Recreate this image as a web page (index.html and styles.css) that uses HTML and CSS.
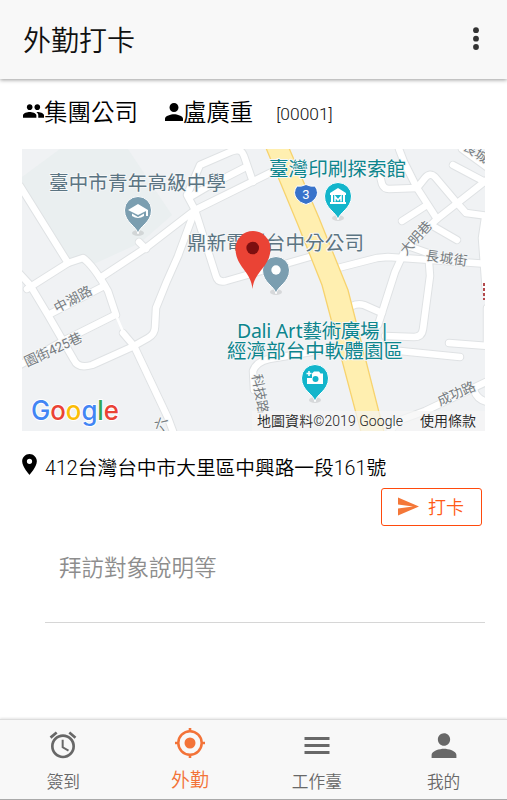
FILE: index.html
```html
<!DOCTYPE html>
<html lang="zh-Hant">
<head>
<meta charset="utf-8">
<title>外勤打卡</title>
<link rel="stylesheet" href="styles.css">
</head>
<body>
<header class="bar">
  <h1 class="title">外勤打卡</h1>
  <svg class="more" viewBox="0 0 8 24"><circle cx="4" cy="3.200" r="2.900"/><circle cx="4" cy="11.700" r="2.900"/><circle cx="4" cy="20" r="2.900"/></svg>
</header>
<main class="content">
  <div class="who">
    <svg class="group-icon" viewBox="1 5 22 14"><path d="M16 11c1.660 0 2.990-1.340 2.990-3S17.660 5 16 5s-3 1.340-3 3 1.340 3 3 3zm-8 0c1.660 0 2.990-1.340 2.990-3S9.660 5 8 5 5 6.340 5 8s1.340 3 3 3zm0 2c-2.330 0-7 1.170-7 3.500V19h14v-2.500c0-2.330-4.670-3.500-7-3.500zm8 0c-.29 0-.62.02-.97.05 1.160.84 1.970 1.970 1.970 3.450V19h6v-2.500c0-2.330-4.670-3.500-7-3.500z"/></svg>
    <span class="company">集團公司</span>
    <svg class="person-icon" viewBox="4 4 16 16"><path d="M12 12c2.210 0 4-1.790 4-4s-1.790-4-4-4-4 1.790-4 4 1.790 4 4 4zm0 2c-2.670 0-8 1.340-8 4v2h16v-2c0-2.660-5.330-4-8-4z"/></svg>
    <span class="name">盧廣重</span>
    <span class="code">[00001]</span>
  </div>
  <svg class="map" viewBox="22 149 463 282">
    <defs>
      <g id="roads">
        <path d="M20 186L68 263L83 258Q93 265 108 291L116 315"/>
        <path d="M123 333L134 346L168 418L174 434"/>
        <path d="M18 272L30 285L48 315L74 360Q78 369 92 365L132 347L148 338Q155 334 155 327L156 308Q166 282 178 256L195 210"/>
        <path d="M27 289L68 263"/>
        <path d="M100 278L147 247L195 210L280 168"/>
        <path d="M139 242L146 249"/>
        <path d="M195 210L187 195L200 165L230 152Q241 147 244 156L253 182"/>
        <path d="M190 197L207 187L246 167"/>
        <path d="M195 210L216 276Q218 283 226 281L313 256"/>
        <path d="M50 314L104 286"/><path d="M18 366L63 341L115 315"/>
        <path d="M338 268L377 258L388 257L488 264"/>
        <path d="M399 149L404 162L417 188L437 219"/>
        <path d="M379 172L382 184Q384 189 389 189L417 188L425 178Q430 172 435 177L457 203L466 213L488 216"/>
        <path d="M402 221L427 205"/><path d="M453 165L485 182"/>
        <path d="M378 325L395 272L405 250L437 219L488 179"/>
        <path d="M431 225L457 240"/><path d="M408 246L428 253"/>
        <path d="M485 218L482 238L486 292"/><path d="M462 149L488 168"/>
        <path d="M429 262L430 276L423 329Q422 337 414 337L385 336"/>
        <path d="M352 306Q358 303 364 305L382 313"/>
        <path d="M449 343L488 346"/><path d="M487 308V345"/>
        <path d="M400 351L460 357"/>
        <path d="M254 390L253 371Q256 362 269 359L317 351L340 345"/>
        <path d="M388 434L398 421L425 411L488 381"/>
        <path d="M474 390Q477 400 488 402"/>
      </g>
      <path id="pin" d="M0 24C-1 16-13.500 13-13.500 0A13.500 13.500 0 0 1 13.500 0C13.500 13 1 16 0 24Z"/>
    </defs>
    <rect x="22" y="149" width="463" height="282" fill="#f0f2f4"/>
    <path d="M22 177L60 149H128L172 215L140 243L94 264L68 263L22 189Z" fill="#eaeff0"/>
    <use href="#roads" class="casing"/>
    <path d="M115 313L124 334" class="lane"/>
    <use href="#roads" class="road"/>
    <path d="M266 148L298 225L322 285L361 432H384L348 290L319 218L289 148Z" class="highway"/>
    <g class="street">
      <text transform="translate(57 313) rotate(-28)" textLength="41">中湖路</text>
      <text transform="translate(27 367) rotate(-25)" textLength="62">園街425巷</text>
      <text transform="translate(406 256) rotate(-48)" textLength="40">大明巷</text>
      <text transform="translate(425 260) rotate(8)" textLength="42">長城街</text>
      <text transform="translate(440 406) rotate(-24)" textLength="40">成功路</text>
      <text transform="translate(252 375) rotate(80)" textLength="40">科技路</text>
      <text transform="translate(462 149) rotate(32)">長城街</text>
      <text transform="translate(163 432) rotate(-70)">六</text>
    </g>
    <g class="place gray">
      <text x="49" y="190" textLength="177">臺中市青年高級中學</text>
      <text x="187" y="250" textLength="177">鼎新電腦台中分公司</text>
    </g>
    <g class="place teal">
      <text x="269" y="176" textLength="137">臺灣印刷探索館</text>
      <text x="237" y="337.500" textLength="153">Dali Art藝術廣場|</text>
      <text x="227" y="357.500" textLength="176">經濟部台中軟體園區</text>
    </g>
    <g class="shadow"><ellipse cx="138" cy="233" rx="6" ry="3"/><ellipse cx="338" cy="218" rx="6" ry="3"/><ellipse cx="276" cy="292" rx="6" ry="3"/><ellipse cx="315" cy="400" rx="6" ry="3"/></g>
    <use href="#pin" x="138" y="210" class="pin slate"/>
    <path d="M128 210L138 204L148 210L138 215ZM132 213.500L138 217L144 213.500V216Q138 220 132 216ZM146 210H148V216H146Z" fill="#fff"/>
    <use href="#pin" x="276" y="270" class="pin slate"/><circle cx="276" cy="270" r="4.700" fill="#fff"/>
    <use href="#pin" x="338" y="196" class="pin cyan"/>
    <path d="M330 193L338 188L346 193V195H330ZM331 195H333V202H331ZM343 195H345V202H343ZM330 202H346V204H330Z" fill="#fff"/><path d="M335 201.500V196.500L338 200L341 196.500V201.500" fill="none" stroke="#fff" stroke-width="1.500"/>
    <use href="#pin" x="315" y="378" class="pin cyan"/>
    <path d="M312 373.500L314 371.500H319L320.500 373.500H323V384H307V378H312Z" fill="#fff"/><circle cx="315.500" cy="379" r="3" fill="#12b5cb"/><path d="M309 371V376M306.500 373.500H311.500" stroke="#fff" stroke-width="1.500"/>
    <path d="M297 186Q301 187 306 184.500Q311 187 315 186Q320 193 315 199Q312 203 306 204.500Q300 203 297 199Q292 193 297 186Z" fill="#3873cb" stroke="#fff" stroke-width="1"/>
    <text x="306" y="198.500" class="shield">3</text>
    <path d="M252.500 289C251 271 235.500 267 235.500 248.500A17.500 17.500 0 0 1 270.500 248.500C270.500 267 254 271 252.500 289Z" fill="#ea4335"/><circle cx="252.700" cy="248" r="6.300" fill="#7d0f10"/>
    <path d="M484 283V300" stroke="#b34a4c" stroke-width="2" stroke-dasharray="3 2"/>
    <rect x="252" y="411" width="233" height="20" fill="#f5f5f5" opacity=".7"/>
    <text x="31" y="420" class="logo" textLength="88" lengthAdjust="spacingAndGlyphs"><tspan fill="#4285f4">G</tspan><tspan fill="#ea4335">o</tspan><tspan fill="#fbbc05">o</tspan><tspan fill="#4285f4">g</tspan><tspan fill="#34a853">l</tspan><tspan fill="#ea4335">e</tspan></text>
    <g class="credit"><text x="257" y="425.500" textLength="146">地圖資料©2019 Google</text><text x="420" y="425.500" textLength="56">使用條款</text></g>
  </svg>
  <div class="address">
    <svg class="place-icon" viewBox="5 2 14 20"><path d="M12 2C8.130 2 5 5.130 5 9c0 5.250 7 13 7 13s7-7.750 7-13c0-3.870-3.130-7-7-7zm0 9.500a2.500 2.500 0 0 1 0-5 2.500 2.500 0 0 1 0 5z"/></svg>
    <span class="address-text">412台灣台中市大里區中興路一段161號</span>
  </div>
  <button class="punch"><svg class="send" viewBox="2 3 21 18"><path d="M2.010 21L23 12 2.010 3 2 10l15 2-15 2z"/></svg><span>打卡</span></button>
  <div class="note">拜訪對象說明等</div>
</main>
<nav class="tabs">
  <a class="tab"><svg viewBox="0 0 24 24"><path d="M22 5.720l-4.600-3.860-1.290 1.530 4.600 3.860L22 5.720zM7.880 3.390L6.600 1.860 2 5.710l1.290 1.530 4.590-3.850zM12.500 8H11v6l4.750 2.850.75-1.230-4-2.370V8zM12 4c-4.970 0-9 4.030-9 9s4.020 9 9 9a9 9 0 0 0 0-18zm0 16c-3.870 0-7-3.130-7-7s3.130-7 7-7 7 3.130 7 7-3.130 7-7 7z"/></svg><span>簽到</span></a>
  <a class="tab active"><svg viewBox="0 0 32 32"><circle cx="16" cy="16" r="11.700" fill="none" stroke="currentColor" stroke-width="2.500"/><circle cx="16" cy="16" r="5.500"/><path d="M14.700 1h2.600v4h-2.600zM14.700 27h2.600v4h-2.600zM1 14.700h4v2.600H1zM27 14.700h4v2.600h-4z"/></svg><span>外勤</span></a>
  <a class="tab"><svg viewBox="0 0 32 32"><path d="M3.500 8h25v3h-25zM3.500 15h25v3h-25zM3.500 22h25v3h-25z"/></svg><span>工作臺</span></a>
  <a class="tab"><svg viewBox="0 0 24 24"><path d="M12 12.500c2.500 0 4.600-2.100 4.600-4.700S14.500 3.200 12 3.200 7.400 5.300 7.400 7.800s2.100 4.700 4.600 4.700zm0 2.300c-3.100 0-9.300 1.500-9.300 4.600v2.400h18.600v-2.400c0-3.100-6.200-4.600-9.300-4.600z"/></svg><span>我的</span></a>
</nav>
</body>
</html>
```

FILE: styles.css
```css
* { box-sizing: border-box; }
body {
  margin: 0;
  height: 800px;
  display: flex;
  flex-direction: column;
  overflow: hidden;
  background: #fff;
  color: #000;
  font-family: Roboto, "Noto Sans CJK TC", sans-serif;
  font-weight: 350;
}
svg { flex: none; fill: currentColor; }
.bar {
  height: 79px;
  flex: none;
  display: flex;
  align-items: center;
  justify-content: space-between;
  padding: 0 27px 0 23px;
  background: #f8f8f8;
  box-shadow: 0 1px 4px rgba(0, 0, 0, .4);
}
.title { margin: 4px 0 0; font-size: 28px; line-height: 40px; font-weight: 350; color: #111; }
.more { width: 8px; height: 24px; margin-bottom: 2px; color: #333; }
.content { flex: 1; padding: 15px 22px 0; display: flex; flex-direction: column; }
.who { height: 34px; display: flex; align-items: center; font-size: 23.500px; white-space: nowrap; }
.group-icon { width: 21px; height: 14px; margin-left: 1px; }
.person-icon { width: 18px; height: 18px; margin: 2px 0 0 27px; }
.name { font-size: 23.400px; }
.code { font-size: 17.400px; margin: 6px 0 0 23px; font-weight: 350; color: #111; }
.map { width: 463px; height: 282px; margin-top: 21px; display: block; overflow: hidden; }
.casing, .road { fill: none; stroke-linecap: round; stroke-linejoin: round; }
.casing { stroke: #dfe2e4; stroke-width: 8.500px; }
.road { stroke: #fff; stroke-width: 6.500px; }
.lane { fill: none; stroke: #fff; stroke-width: 2.500px; }
.highway { fill: #ffefb0; stroke: #f7d36e; stroke-width: 1.300px; }
.map text { paint-order: stroke; stroke: #f5f7f8; stroke-width: 2px; stroke-linejoin: round; font-weight: 400; }
.street { font-size: 13.500px; fill: #777c80; }
.place { font-size: 19.500px; font-family: "Noto Sans", "Noto Sans CJK TC", sans-serif; }
.gray { fill: #5b7482; }
.teal { fill: #0d858d; }
.pin { stroke: #fff; stroke-width: 1px; }
.slate { fill: #7b9eb0; }
.cyan { fill: #12b5cb; }
.shadow { fill: #000; opacity: .1; }
.map .shield { fill: #fff; stroke: none; font-size: 13px; text-anchor: middle; }
.map .logo { font-family: Inter, sans-serif; font-size: 27px; font-weight: 500; stroke: #fff; stroke-width: 2px; }
.map .credit text { font-size: 14px; font-weight: 350; fill: #222; stroke: none; }
.address { height: 34px; margin-top: 20px; display: flex; align-items: flex-start; white-space: nowrap; }
.place-icon { width: 15px; height: 21px; margin-top: 3px; }
.address-text { margin: 3px 0 0 8px; font-size: 19.700px; line-height: 30px; }
.punch {
  width: 101px;
  height: 38px;
  margin: 3px 3px 0 0;
  align-self: flex-end;
  display: flex;
  align-items: center;
  gap: 9px;
  padding: 0 0 1px 16px;
  border: 1px solid #ff4a0c;
  border-radius: 3px;
  background: #fff;
  color: #ff5a16;
  font: 350 18px Roboto, "Noto Sans CJK TC", sans-serif;
}
.punch span { margin-top: -2px; }
.send { width: 21px; height: 19px; color: #f47738; }
.note {
  height: 97px;
  margin-left: 23px;
  padding: 25px 14px 0;
  border-bottom: 1px solid #d6d6d6;
  color: #8d8d8d;
  font-size: 22.500px;
  line-height: 34px;
}
.tabs {
  height: 81px;
  flex: none;
  display: flex;
  background: #f8f8f8;
  border-top: 1px solid #ddd;
  border-bottom: 1px solid #aaa;
  box-shadow: 0 -1px 2px rgba(0, 0, 0, .1);
}
.tab {
  flex: 1;
  display: flex;
  flex-direction: column;
  align-items: center;
  padding-top: 9px;
  color: #686868;
  font-size: 16.700px;
  line-height: 24px;
}
.tab svg { width: 32px; height: 32px; margin-bottom: 10px; }
.active { padding-top: 7px; color: #f37338; font-size: 19px; }
```
